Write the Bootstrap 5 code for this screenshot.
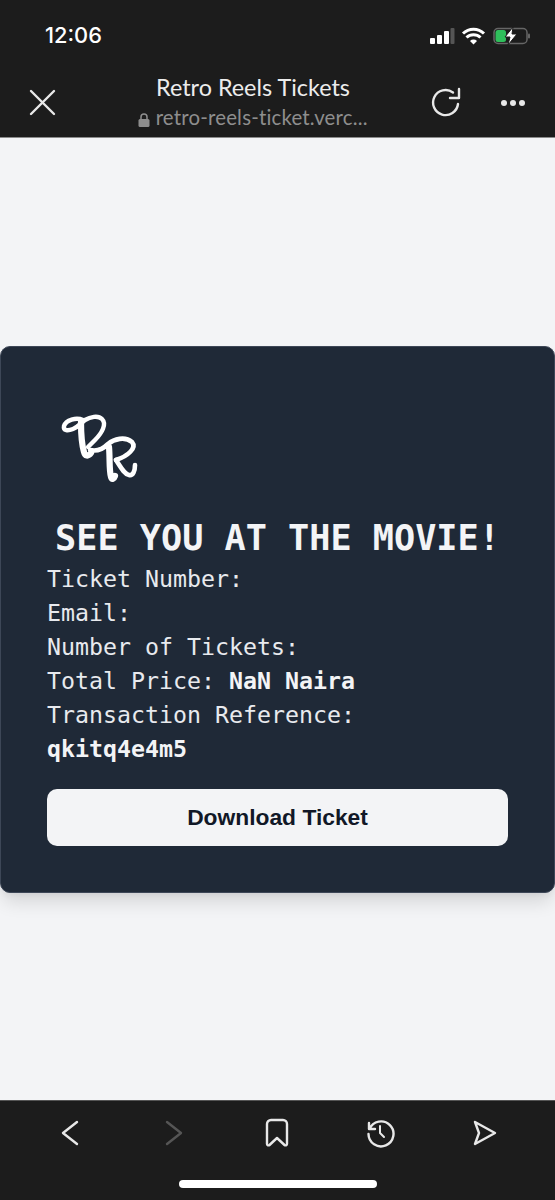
<!DOCTYPE html>
<html lang="en">
<head>
    <meta charset="UTF-8">
    <meta name="viewport" content="width=device-width, initial-scale=1.0">
    <title>Retro Reels Tickets</title>
    <link href="https://cdn.jsdelivr.net/npm/bootstrap@5.3.0/dist/css/bootstrap.min.css" rel="stylesheet">
    <style>
        body {
            background-color: #f3f4f6;
            overflow: hidden;
        }
        .top-chrome {
            height: 138px;
            background: #1c1c1c;
            color: #fff;
            border-bottom: 1px solid #8b8b8b;
            font-family: "Lato", sans-serif;
        }
        .status-row {
            height: 68px;
            padding: 0 25px 0 45px;
        }
        .clock {
            font-family: "Inter", sans-serif;
            font-size: 21.800px;
            font-weight: 500;
            line-height: 1;
            margin-top: 3px;
        }
        .status-icons {
            margin-top: 4px;
        }
        .tool-row {
            height: 69px;
            padding: 0 29px 0 29px;
        }
        .tool-close {
            width: 27px;
        }
        .tool-title {
            width: 280px;
            margin-left: 57px;
            margin-top: -2px;
            text-align: center;
            line-height: 1;
        }
        .page-name {
            font-size: 23.400px;
            color: #ececec;
            line-height: 30px;
        }
        .page-url {
            font-size: 20.400px;
            color: #8e8e8e;
            line-height: 27px;
            letter-spacing: .2px;
            white-space: nowrap;
            margin-top: 2px;
        }
        .reload-icon {
            margin-right: 38px;
        }
        .page-area {
            height: 962px;
        }
        .ticket-card {
            height: 547px;
            background: #1f2937;
            border: 1px solid #3d4757;
            border-radius: 10px;
            box-shadow: 0 12px 18px -3px rgba(0, 0, 0, .12), 0 4px 6px -2px rgba(0, 0, 0, .05);
            padding: 65px 46px 0;
            color: #e8eaee;
            font-family: "DejaVu Sans Mono", monospace;
        }
        .ticket-logo {
            display: block;
            margin-left: 13px;
        }
        .ticket-title {
            font-family: "DejaVu Sans Mono", monospace;
            font-size: 35.200px;
            font-weight: 700;
            line-height: 42px;
            color: #f3f4f6;
            text-align: center;
            margin: 29px 0 3px;
            white-space: nowrap;
        }
        .ticket-line {
            font-size: 23.250px;
            line-height: 34px;
            margin: 0;
        }
        .ticket-line b {
            font-weight: 700;
            color: #f3f4f6;
        }
        .ticket-btn {
            height: 57px;
            margin-top: 23px;
            background: #f3f4f6;
            color: #111827;
            border: 0;
            border-radius: 10px;
            font-family: "Liberation Sans", sans-serif;
            font-size: 22.800px;
            font-weight: 700;
        }
        .bottom-chrome {
            height: 100px;
            background: #1c1c1c;
            border-top: 1px solid #555;
            padding: 0 18px;
        }
        .bottom-icons {
            height: 66px;
            margin-top: -1px;
        }
        .bottom-icons > div {
            width: 103.800px;
        }
        .home-bar {
            width: 198px;
            height: 8px;
            background: #fff;
            border-radius: 4px;
            margin: 14px auto 0;
        }
    </style>
</head>
<body>

<div class="d-flex flex-column vh-100">
    <!-- Browser header -->
    <header class="top-chrome flex-shrink-0">
        <div class="status-row d-flex align-items-center justify-content-between">
            <span class="clock">12:06</span>
            <svg class="status-icons" width="100" height="18" viewBox="0 0 100 18">
                <rect x="0" y="11" width="5" height="6" rx="1" fill="#fff"/>
                <rect x="7" y="8" width="5" height="9" rx="1" fill="#fff"/>
                <rect x="14" y="4" width="5" height="13" rx="1" fill="#fff"/>
                <rect x="20.500" y="1" width="4" height="16" rx="1" fill="#555"/>
                <path d="M33 6.500a15 15 0 0 1 21 0M36.500 10.500a10 10 0 0 1 14 0" fill="none" stroke="#fff" stroke-width="3"/>
                <path d="M40 14a5 5 0 0 1 7 0L43.500 17.500z" fill="#fff"/>
                <rect x="64" y="1.500" width="33" height="15" rx="4" fill="none" stroke="#666" stroke-width="1.500"/>
                <rect x="65.500" y="3" width="10.500" height="12" rx="2.500" fill="#2fbf5b"/>
                <rect x="98" y="6.500" width="2" height="5" rx="1" fill="#666"/>
                <path d="M83 0 75 10h5l-2 8 9-11h-5z" fill="#fff" stroke="#1c1c1c"/>
            </svg>
        </div>
        <div class="tool-row d-flex align-items-center">
            <svg class="tool-close" height="27" viewBox="0 0 27 27">
                <path d="M2 2 25 25M25 2 2 25" stroke="#e8e8e8" stroke-width="2.400" stroke-linecap="round"/>
            </svg>
            <div class="tool-title">
                <div class="page-name">Retro Reels Tickets</div>
                <div class="page-url">
                    <svg width="12" height="14" viewBox="0 0 12 14">
                        <path d="M3 6V4a3 3 0 0 1 6 0v2" fill="none" stroke="#8e8e8e" stroke-width="1.500"/>
                        <rect x="0.500" y="6" width="11" height="8" rx="1.500" fill="#8e8e8e"/>
                    </svg>
                    retro-reels-ticket.verc...
                </div>
            </div>
            <svg width="32" height="32" viewBox="0 0 32 32" class="ms-auto reload-icon">
                <path d="M28 17A12.500 12.500 0 1 1 23 5.500" fill="none" stroke="#e8e8e8" stroke-width="2.400" stroke-linecap="round"/>
                <path d="M29 2v9h-9" fill="none" stroke="#e8e8e8" stroke-width="2.400" stroke-linecap="round" stroke-linejoin="round"/>
            </svg>
            <svg width="26" height="8" viewBox="0 0 26 8">
                <circle cx="4" cy="4" r="3" fill="#e8e8e8"/>
                <circle cx="13" cy="4" r="3" fill="#e8e8e8"/>
                <circle cx="22" cy="4" r="3" fill="#e8e8e8"/>
            </svg>
        </div>
    </header>

    <!-- Ticket -->
    <main class="page-area d-flex align-items-center flex-shrink-0">
        <div class="ticket-card w-100">
            <svg class="ticket-logo" width="80" height="76" viewBox="20 12 80 76" role="img" aria-label="Retro Reels logo">
                <g fill="none" stroke="#fff" stroke-linecap="round" stroke-linejoin="round">
                    <path d="M43 20C36 17 26 20 24 26 23 31 28 31 33 29 38 27 40 24 45 20 50 17 58 15 62 19 67 24 62 33 55 40 52 43 50 45 48 47" stroke-width="4.400"/>
                    <path d="M41 22C41 32 41 42 44 52 45 56 48 57 51 53" stroke-width="6.200"/>
                    <path d="M50 50C58 52 64 48 68 44 74 39 85 36 92 42 97 48 88 56 76 60" stroke-width="4.600"/>
                    <path d="M69 47C70 58 69 70 71 77 72 80 74 79 75 76" stroke-width="6.200"/>
                    <path d="M76 60C80 66 84 74 89 75 93 76 95 71 95 65" stroke-width="4.600"/>
                </g>
            </svg>
            <h1 class="ticket-title">SEE YOU AT THE MOVIE!</h1>
            <p class="ticket-line">Ticket Number:</p>
            <p class="ticket-line">Email:</p>
            <p class="ticket-line">Number of Tickets:</p>
            <p class="ticket-line">Total Price: <b>NaN Naira</b></p>
            <p class="ticket-line">Transaction Reference:</p>
            <p class="ticket-line"><b>qkitq4e4m5</b></p>
            <button class="btn ticket-btn w-100">Download Ticket</button>
        </div>
    </main>

    <!-- Browser bottom bar -->
    <footer class="bottom-chrome flex-shrink-0">
        <div class="bottom-icons d-flex align-items-center">
            <div class="text-center">
                <svg width="20" height="26" viewBox="0 0 20 26"><path d="M17 2 3 13l14 11" fill="none" stroke="#e8e8e8" stroke-width="2.400" stroke-linecap="round" stroke-linejoin="round"/></svg>
            </div>
            <div class="text-center">
                <svg width="20" height="26" viewBox="0 0 20 26"><path d="M3 2l14 11L3 24" fill="none" stroke="#555" stroke-width="2.400" stroke-linecap="round" stroke-linejoin="round"/></svg>
            </div>
            <div class="text-center">
                <svg width="24" height="30" viewBox="0 0 24 30"><path d="M2 26V6a4 4 0 0 1 4-4h12a4 4 0 0 1 4 4v20a1.500 1.500 0 0 1-2.500 1L12 20l-7.500 7A1.500 1.500 0 0 1 2 26z" fill="none" stroke="#e8e8e8" stroke-width="2.400" stroke-linejoin="round"/></svg>
            </div>
            <div class="text-center">
                <svg width="30" height="30" viewBox="0 0 30 30"><path d="M3 5v6h6M3.500 11A12.500 12.500 0 1 1 2.500 16" fill="none" stroke="#e8e8e8" stroke-width="2.400" stroke-linecap="round" stroke-linejoin="round"/><path d="M14 8v7l4 4" fill="none" stroke="#e8e8e8" stroke-width="2" stroke-linecap="round" stroke-linejoin="round"/></svg>
            </div>
            <div class="text-center">
                <svg width="24" height="26" viewBox="0 0 24 26"><path d="M2 2 22 13 2 24l4-11z" fill="none" stroke="#e8e8e8" stroke-width="2.400" stroke-linejoin="round"/></svg>
            </div>
        </div>
        <div class="home-bar"></div>
    </footer>
</div>

<script src="https://cdn.jsdelivr.net/npm/bootstrap@5.3.0/dist/js/bootstrap.bundle.min.js"></script>
</body>
</html>
